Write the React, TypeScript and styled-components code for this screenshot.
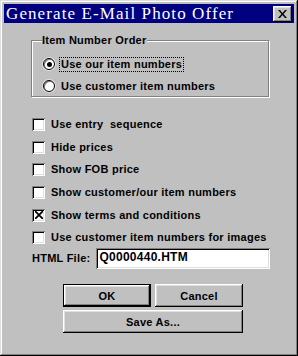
import styled, { createGlobalStyle, css } from 'styled-components';

const GlobalStyle = createGlobalStyle`
  html, body {
    margin: 0;
    padding: 0;
    background: #c0c0c0;
  }
  * {
    box-sizing: border-box;
  }
`;

const raised = css`
  box-shadow:
    inset -1px -1px #000,
    inset 1px 1px #fff,
    inset -2px -2px #808080,
    inset 2px 2px #dfdfdf;
`;

const sunken = css`
  box-shadow:
    inset 1px 1px #808080,
    inset -1px -1px #fff,
    inset 2px 2px #000,
    inset -2px -2px #dfdfdf;
`;

export default function App() {
  return (
    <>
      <GlobalStyle />
      <Window>
        <TitleBar>
          <Title>Generate E-Mail Photo Offer</Title>
          <CloseButton>
            <svg width='9' height='8' viewBox='0 0 9 8'>
              <path d='M0 0h2l2.5 3L7 0h2L5.5 4 9 8H7L4.5 5 2 8H0l3.5-4z' fill='#000' />
            </svg>
          </CloseButton>
        </TitleBar>
        <Body>
          <Group>
            <Legend>Item Number Order</Legend>
            <Row>
              <Radio checked />
              <Label focused>Use our item numbers</Label>
            </Row>
            <Row>
              <Radio />
              <Label>Use customer item numbers</Label>
            </Row>
          </Group>
          <Options>
            <Row>
              <Check />
              <Label>Use entry&nbsp; sequence</Label>
            </Row>
            <Row>
              <Check />
              <Label>Hide prices</Label>
            </Row>
            <Row>
              <Check />
              <Label>Show FOB price</Label>
            </Row>
            <Row>
              <Check />
              <Label>Show customer/our item numbers</Label>
            </Row>
            <Row>
              <Check checked>
                <svg width='8' height='8' viewBox='0 0 8 8'>
                  <path d='M0 0L8 8M8 0L0 8' stroke='#000' strokeWidth='1.8' />
                </svg>
              </Check>
              <Label>Show terms and conditions</Label>
            </Row>
            <Row>
              <Check />
              <Label>Use customer item numbers for images</Label>
            </Row>
            <FileRow>
              <Label>HTML File:</Label>
              <Input>Q0000440.HTM</Input>
            </FileRow>
          </Options>
          <Buttons>
            <Button primary>OK</Button>
            <Button>Cancel</Button>
            <Button wide>Save As...</Button>
          </Buttons>
        </Body>
      </Window>
    </>
  );
}

const Window = styled.div`
  width: 298px;
  height: 356px;
  padding: 4px;
  background: #c0c0c0;
  display: flex;
  flex-direction: column;
  font-family: 'Liberation Sans', Arial, sans-serif;
  font-weight: 700;
  font-size: 11px;
  letter-spacing: 0.25px;
  color: #000;
  box-shadow:
    inset -1px -1px #000,
    inset 1px 1px #dfdfdf,
    inset -2px -2px #808080,
    inset 2px 2px #fff;
`;

const TitleBar = styled.div`
  height: 19px;
  background: #000080;
  display: flex;
  align-items: center;
  justify-content: space-between;
  padding: 0 2px 0 2px;
`;

const Title = styled.div`
  font-family: 'Liberation Serif', 'Times New Roman', serif;
  font-weight: 400;
  font-size: 17px;
  letter-spacing: 1.1px;
  color: #fff;
  line-height: 19px;
`;

const CloseButton = styled.div`
  width: 19px;
  height: 16px;
  background: #c0c0c0;
  display: flex;
  align-items: center;
  justify-content: center;
  ${raised};
`;

const Body = styled.div`
  flex: 1;
  display: flex;
  flex-direction: column;
  padding: 11px 0 0 27px;
`;

const Group = styled.fieldset`
  width: 238px;
  height: 63px;
  margin: 0;
  padding: 6px 0 0 11px;
  border: 1px solid #808080;
  box-shadow: inset 1px 1px #fff, 1px 1px #fff;
  display: flex;
  flex-direction: column;
`;

const Legend = styled.legend`
  padding: 0;
  margin-left: -1px;
  line-height: 13px;
  background: #c0c0c0;
`;

const Row = styled.div`
  height: 22px;
  display: flex;
  align-items: center;
  gap: 6px;
`;

const Radio = styled.span<{ checked?: boolean }>`
  width: 12px;
  height: 12px;
  border-radius: 50%;
  background: #fff;
  border: 1px solid #000;
  box-shadow: inset 1px 1px #808080, 0 0 0 1px #dfdfdf;
  display: flex;
  align-items: center;
  justify-content: center;
  &::after {
    content: '';
    width: 5px;
    height: 5px;
    border-radius: 50%;
    background: ${p => (p.checked ? '#000' : 'transparent')};
  }
`;

const Label = styled.span<{ focused?: boolean }>`
  line-height: 13px;
  white-space: nowrap;
  padding: 0 1px;
  margin-left: -1px;
  outline: ${p => (p.focused ? '1px dotted #000' : 'none')};
`;

const Options = styled.div`
  display: flex;
  flex-direction: column;
  margin-top: 16px;
  padding-left: 1px;
  & > ${Row} {
    height: 22.7px;
  }
`;

const Check = styled.span<{ checked?: boolean }>`
  width: 13px;
  height: 13px;
  background: #fff;
  display: flex;
  align-items: center;
  justify-content: center;
  ${sunken};
`;

const FileRow = styled.div`
  display: flex;
  align-items: center;
  gap: 4px;
  margin-top: -1px;
  height: 21px;
`;

const Input = styled.div`
  width: 174px;
  height: 21px;
  background: #fff;
  padding: 3px 0 0 4px;
  line-height: 13px;
  font-size: 12px;
  ${sunken};
`;

const Buttons = styled.div`
  display: grid;
  grid-template-columns: 88px 88px;
  gap: 3px 4px;
  margin: 15px 0 0 32px;
`;

const Button = styled.div<{ primary?: boolean; wide?: boolean }>`
  height: 23px;
  background: #c0c0c0;
  display: flex;
  align-items: center;
  justify-content: center;
  grid-column: ${p => (p.wide ? '1 / 3' : 'auto')};
  border: ${p => (p.primary ? '1px solid #000' : '0')};
  ${raised};
`;
